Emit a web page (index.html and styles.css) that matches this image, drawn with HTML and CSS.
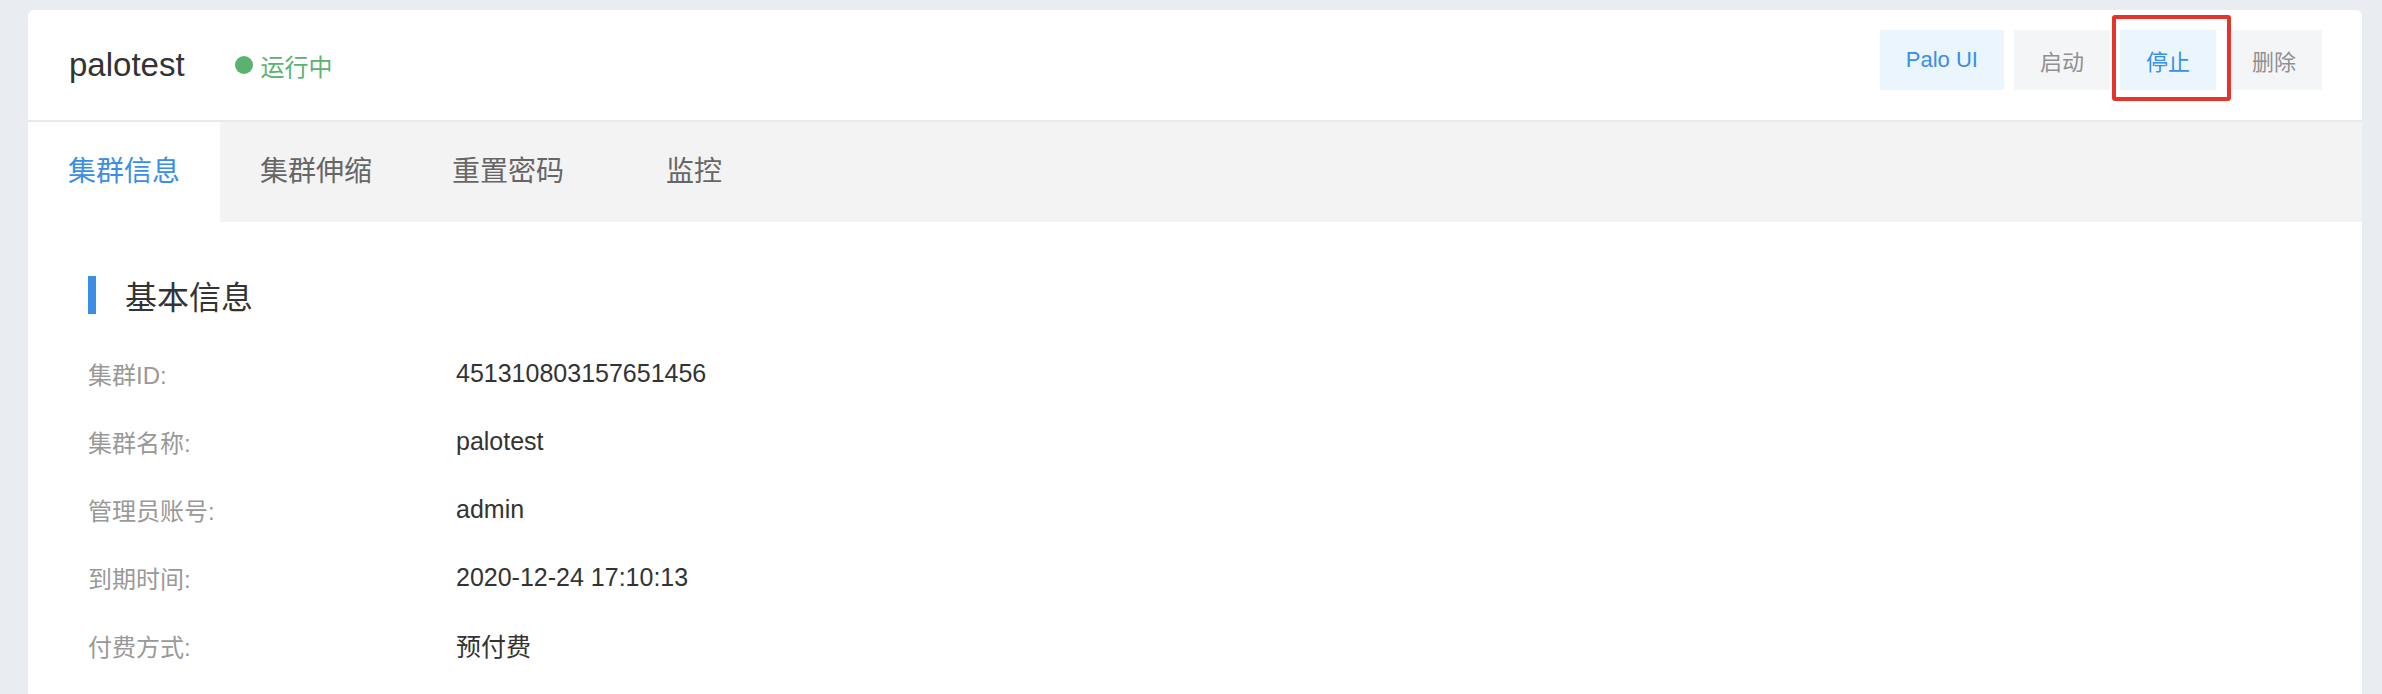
FILE: index.html
```html
<!DOCTYPE html>
<html lang="zh-CN">
<head>
    <meta charset="UTF-8">
    <title>palotest</title>
    <link rel="stylesheet" href="styles.css">
</head>
<body>
    <main class="page">
        <section class="card">
            <header class="header">
                <div class="headLeft">
                    <h1 class="clusterName">palotest</h1>
                    <span class="status"><i class="dot"></i>运行中</span>
                </div>
                <div class="actions">
                    <button class="btn primary">Palo UI</button>
                    <button class="btn">启动</button>
                    <button class="btn primary marked">停止<span class="mark"></span></button>
                    <button class="btn">删除</button>
                </div>
            </header>

            <nav class="tabs">
                <a class="tab active">集群信息</a>
                <a class="tab">集群伸缩</a>
                <a class="tab">重置密码</a>
                <a class="tab short">监控</a>
            </nav>

            <div class="content">
                <h2 class="blockTitle">基本信息</h2>
                <div class="infoList">
                    <div class="row"><span class="label">集群ID:</span><span class="value">451310803157651456</span></div>
                    <div class="row"><span class="label">集群名称:</span><span class="value">palotest</span></div>
                    <div class="row"><span class="label">管理员账号:</span><span class="value">admin</span></div>
                    <div class="row"><span class="label">到期时间:</span><span class="value">2020-12-24 17:10:13</span></div>
                    <div class="row"><span class="label">付费方式:</span><span class="value">预付费</span></div>
                </div>
            </div>
        </section>
    </main>
</body>
</html>
```

FILE: styles.css
```css
body{
    margin: 0;
    background: #e9ecf0;
    font-family: "Liberation Sans", "Noto Sans CJK SC", sans-serif;
    color: #333;
    overflow: hidden;
}
.page{
    padding: 10px 20px 0 28px;
}
.card{
    background: #fff;
    border-radius: 6px 6px 0 0;
    min-height: 760px;
}
.header{
    display: flex;
    justify-content: space-between;
    height: 110px;
    padding: 0 40px 0 41px;
    border-bottom: 2px solid #e8e9ed;
}
.headLeft{
    display: flex;
    align-items: center;
}
.clusterName{
    margin: 0;
    font-size: 33px;
    font-weight: normal;
    color: #333;
}
.status{
    display: flex;
    align-items: center;
    margin-left: 50px;
    font-size: 24px;
    color: #5bb370;
}
.dot{
    width: 18px;
    height: 18px;
    border-radius: 50%;
    background: #5bb270;
    margin-right: 8px;
}
.actions{
    display: flex;
    gap: 10px;
    margin-top: 20px;
    align-self: flex-start;
}
.btn{
    height: 60px;
    min-width: 96px;
    padding: 0 26px;
    border: none;
    background: #f4f5f7;
    color: #909090;
    font-family: inherit;
    font-size: 22px;
}
.btn.primary{
    background: #eaf5fe;
    color: #3a8ee6;
}
.btn.marked{
    position: relative;
}
.mark{
    position: absolute;
    left: -8px;
    right: -15px;
    top: -15px;
    bottom: -11px;
    border: 4px solid #e5352b;
    border-radius: 3px;
}
.tabs{
    display: flex;
    height: 100px;
    background: #f3f3f4;
}
.tab{
    width: 192px;
    line-height: 100px;
    text-align: center;
    font-size: 28px;
    color: #666;
}
.tab.short{
    width: 180px;
}
.tab.active{
    background: #fff;
    color: #3a8ee6;
}
.content{
    padding: 54px 60px 0 60px;
}
.blockTitle{
    display: flex;
    align-items: center;
    height: 38px;
    margin: 0 0 25px 0;
    font-size: 32px;
    font-weight: normal;
    color: #333;
}
.blockTitle::before{
    content: "";
    width: 8px;
    height: 38px;
    background: #3a8ee6;
    margin-right: 29px;
}
.row{
    display: grid;
    grid-template-columns: 368px 1fr;
    align-items: center;
    height: 68px;
}
.label{
    font-size: 24px;
    color: #999;
}
.value{
    font-size: 25px;
    color: #333;
}
```
